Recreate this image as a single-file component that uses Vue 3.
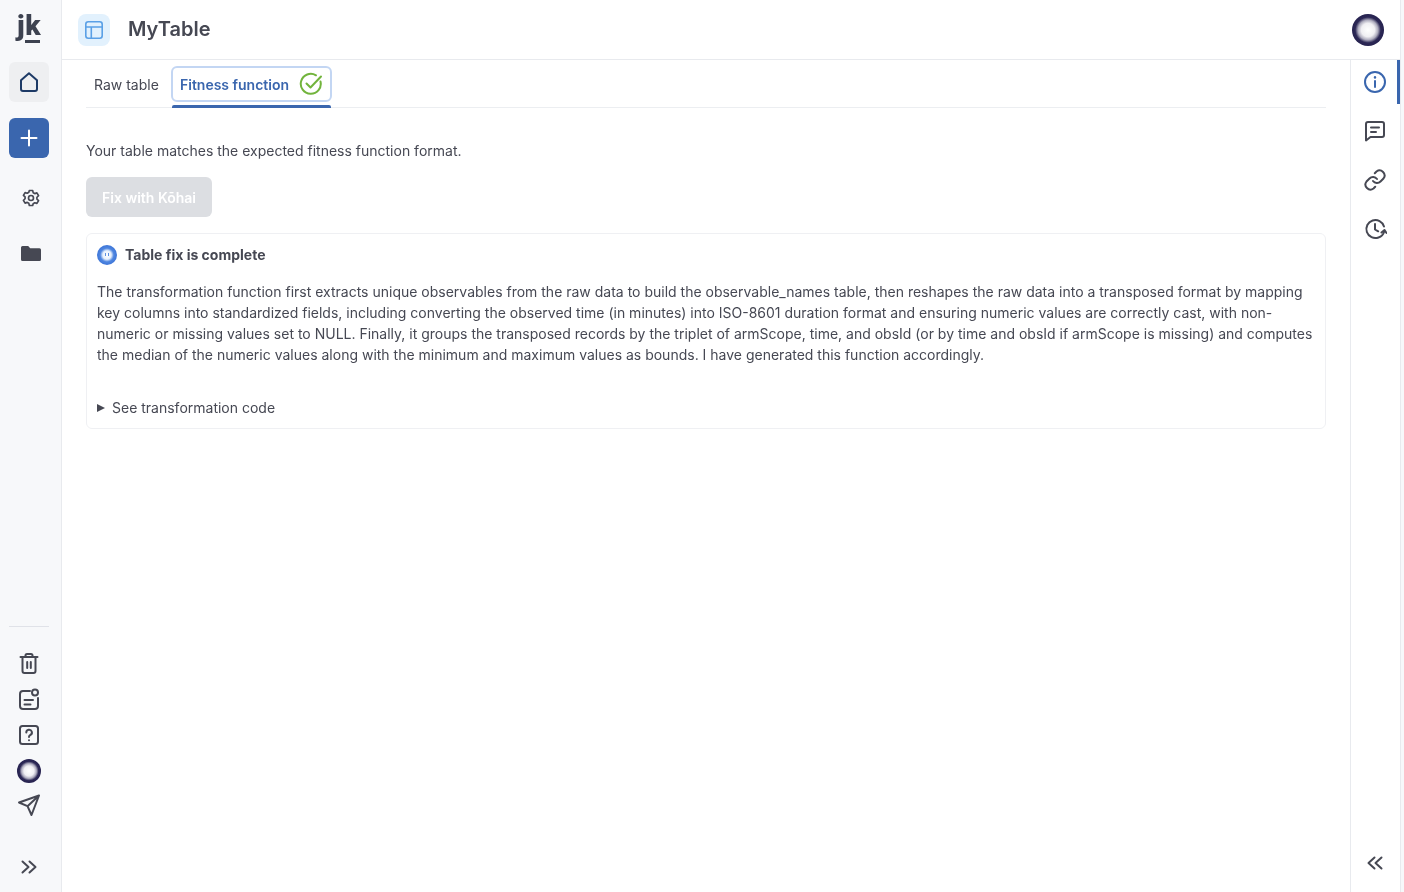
<template>
  <div class="app">
    <aside class="sidebar">
      <div class="logo">
        <span class="logo-text">j<span class="logo-k">k</span></span>
      </div>
      <button class="side-btn side-btn--home">
        <svg width="24" height="24" viewBox="0 0 24 24" fill="none" stroke="#1d3a66" stroke-width="2" stroke-linejoin="round"><path d="M4 10.2 12 3.2l8 7V19a2 2 0 0 1-2 2H6a2 2 0 0 1-2-2z" /></svg>
      </button>
      <button class="side-btn side-btn--add">
        <svg width="20" height="20" viewBox="0 0 20 20" fill="none" stroke="#fff" stroke-width="2" stroke-linecap="round"><path d="M10 2.5v15M2.5 10h15" /></svg>
      </button>
      <div class="side-icon side-icon--gear">
        <svg width="20" height="20" viewBox="0 0 24 24" fill="none" stroke="#464853" stroke-width="2" stroke-linejoin="round"><path d="M10 3h4l.6 2.6 1.9 1.1 2.6-.8 2 3.4-2 1.8v2.2l2 1.8-2 3.4-2.6-.8-1.9 1.1L14 21h-4l-.6-2.6-1.9-1.1-2.6.8-2-3.4 2-1.8v-2.2l-2-1.8 2-3.4 2.6.8 1.9-1.1z" /><circle cx="12" cy="12" r="3" /></svg>
      </div>
      <div class="side-icon side-icon--folder">
        <svg width="22" height="22" viewBox="0 0 22 22"><path d="M1 5.5A1.5 1.5 0 0 1 2.500 4h5.700l2 2.200h9.300A1.500 1.500 0 0 1 21 7.700v9.800a1.500 1.500 0 0 1-1.500 1.500h-17A1.500 1.500 0 0 1 1 17.500z" fill="#464853" /></svg>
      </div>

      <div class="side-bottom">
        <div class="side-divider"></div>
        <div class="tool">
          <svg width="22" height="22" viewBox="0 0 22 22" fill="none" stroke="#464853" stroke-width="2" stroke-linecap="round" stroke-linejoin="round"><path d="M2.500 5h17M7.500 5V3.500a1.500 1.500 0 0 1 1.500-1.500h4a1.500 1.500 0 0 1 1.500 1.500V5M4.500 5v14a2 2 0 0 0 2 2h9a2 2 0 0 0 2-2V5M9.200 10v6M12.800 10v6" /></svg>
        </div>
        <div class="tool">
          <svg width="22" height="22" viewBox="0 0 22 22" fill="none" stroke="#464853" stroke-width="2" stroke-linecap="round" stroke-linejoin="round"><path d="M12 3H5a3 3 0 0 0-3 3v12a3 3 0 0 0 3 3h12a3 3 0 0 0 3-3v-8M6.500 12h8.500M6.500 16.500h6" /><circle cx="17" cy="4.500" r="3" /></svg>
        </div>
        <div class="tool">
          <svg width="22" height="22" viewBox="0 0 22 22" fill="none" stroke="#464853" stroke-width="2" stroke-linecap="round" stroke-linejoin="round"><rect x="2" y="2" width="18" height="18" rx="2.500" /><path d="M8.300 8.500a2.800 2.800 0 1 1 4.200 2.400c-1 .6-1.500 1.100-1.500 2.100" /><path d="M11 16.200v.1" /></svg>
        </div>
        <div class="tool">
          <span class="orb orb--small"></span>
        </div>
        <div class="tool tool--send">
          <svg width="24" height="24" viewBox="0 0 24 24" fill="none" stroke="#464853" stroke-width="2" stroke-linejoin="round" stroke-linecap="round"><path d="M22 2.500 2 9.500l8.500 3.700L14.500 22zM10.500 13.200 22 2.500" /></svg>
        </div>
        <div class="tool tool--expand">
          <svg width="18" height="18" viewBox="0 0 18 18" fill="none" stroke="#464853" stroke-width="2" stroke-linecap="round" stroke-linejoin="round"><path d="m2.500 3.500 6 5.500-6 5.500M9.500 3.500l6 5.500-6 5.500" /></svg>
        </div>
      </div>
    </aside>

    <div class="main">
      <header class="header">
        <div class="header-left">
          <div class="table-badge">
            <svg width="20" height="20" viewBox="0 0 20 20" fill="none" stroke="#5aa0e6" stroke-width="1.600"><rect x="1.800" y="1.800" width="16.400" height="16.400" rx="2.500" /><path d="M1.800 7h16.400M7.300 7v11.200" /></svg>
          </div>
          <h1 class="title">MyTable</h1>
        </div>
        <span class="orb"></span>
      </header>

      <div class="body">
        <main class="content">
          <nav class="tabs">
            <button class="tab tab--raw">Raw table</button>
            <button class="tab tab--active">
              Fitness function
              <svg width="24" height="24" viewBox="0 0 24 24" fill="none" stroke="#72b43c" stroke-width="2" stroke-linecap="round" stroke-linejoin="round"><path d="M21.500 9.500A10 10 0 1 1 17 3.300" /><path d="m7.500 11.500 4 4L22 4.500" /></svg>
            </button>
          </nav>

          <p class="status">Your table matches the expected fitness function format.</p>
          <button class="fix-btn" disabled>Fix with Kōhai</button>

          <section class="card">
            <div class="card-head">
              <span class="kohai">
                <i></i><i></i>
              </span>
              <strong>Table fix is complete</strong>
            </div>
            <p class="card-text">The transformation function first extracts unique observables from the raw data to build the observable_names table, then reshapes the raw data into a transposed format by mapping key columns into standardized fields, including converting the observed time (in minutes) into ISO-8601 duration format and ensuring numeric values are correctly cast, with non-numeric or missing values set to NULL. Finally, it groups the transposed records by the triplet of armScope, time, and obsId (or by time and obsId if armScope is missing) and computes the median of the numeric values along with the minimum and maximum values as bounds. I have generated this function accordingly.</p>
            <div class="code-toggle">
              <span class="caret"></span>
              See transformation code
            </div>
          </section>
        </main>

        <aside class="rail">
          <div class="rail-item rail-item--active">
            <svg width="24" height="24" viewBox="0 0 24 24" fill="none" stroke="#3a66ae" stroke-width="2" stroke-linecap="round"><circle cx="12" cy="12" r="10" /><path d="M12 11v6" /><path d="M12 7.300v.2" stroke-width="2.400" /></svg>
          </div>
          <div class="rail-item">
            <svg width="24" height="24" viewBox="0 0 24 24" fill="none" stroke="#464853" stroke-width="2" stroke-linecap="round" stroke-linejoin="round"><path d="M3 5a2 2 0 0 1 2-2h14a2 2 0 0 1 2 2v11a2 2 0 0 1-2 2H7.500L3 21.500zM8 8.500h8M8 13h5" /></svg>
          </div>
          <div class="rail-item">
            <svg width="24" height="24" viewBox="0 0 24 24" fill="none" stroke="#464853" stroke-width="2" stroke-linecap="round" stroke-linejoin="round"><path d="M10 13a5 5 0 0 0 7.500.5l3-3a5 5 0 0 0-7-7l-1.700 1.700" /><path d="M14 11a5 5 0 0 0-7.500-.5l-3 3a5 5 0 0 0 7 7l1.700-1.700" /></svg>
          </div>
          <div class="rail-item">
            <svg width="24" height="24" viewBox="0 0 24 24" fill="none" stroke="#464853" stroke-width="2" stroke-linecap="round" stroke-linejoin="round"><path d="M21 9.500A9 9 0 1 0 15.500 20.500c2.800-.8 4.800-2.800 5.700-6" /><path d="M12 7v5.500l3.200 1.800" /><path d="M18.500 15.500 21.500 13l2 3" /></svg>
          </div>
          <div class="rail-collapse">
            <svg width="18" height="18" viewBox="0 0 18 18" fill="none" stroke="#464853" stroke-width="2" stroke-linecap="round" stroke-linejoin="round"><path d="M8.500 3.500 2.500 9l6 5.500M15.500 3.500 9.500 9l6 5.500" /></svg>
          </div>
        </aside>
      </div>
    </div>
    <div class="gutter"></div>
  </div>
</template>

<script setup>
</script>

<style>
html, body {
  margin: 0;
  background: #fff;
}
</style>

<style scoped>
.app {
  display: flex;
  height: 100vh;
  overflow: hidden;
  font-family: Inter, "Liberation Sans", sans-serif;
  font-size: 14px;
  color: #464853;
  will-change: transform;
}

.sidebar {
  width: 61px;
  flex-shrink: 0;
  display: flex;
  flex-direction: column;
  align-items: center;
  background: #f7f8fa;
  border-right: 1px solid #e8eaee;
  box-sizing: content-box;
}

.logo {
  height: 62px;
  width: 100%;
  display: flex;
  justify-content: center;
  align-items: flex-start;
}
.logo-text {
  margin: 10px 4px 0 0;
  font-family: Roboto, sans-serif;
  font-size: 28px;
  line-height: 32px;
  font-weight: 900;
  letter-spacing: -0.5px;
  color: #3d4250;
}
.logo-k {
  position: relative;
  margin-left: 1px;
}
.logo-k::after {
  content: "";
  position: absolute;
  left: 0;
  right: 0;
  top: 31px;
  height: 3px;
  background: #3d4250;
}

.side-btn {
  width: 40px;
  height: 40px;
  border: none;
  border-radius: 6px;
  padding: 0;
  display: flex;
  align-items: center;
  justify-content: center;
  margin-left: -4px;
}
.side-btn--home { background: #eeeff1; }
.side-btn--add {
  margin-top: 16px;
  background: #3a66ae;
}

.side-icon {
  display: flex;
  justify-content: center;
  margin-left: 1px;
}
.side-icon--gear { margin-top: 30px; }
.side-icon--folder { margin-top: 34px; }

.side-bottom {
  margin-top: auto;
  width: 100%;
  display: flex;
  flex-direction: column;
  align-items: center;
  padding-bottom: 16px;
}
.side-divider {
  width: 40px;
  height: 1px;
  background: #e0e2e8;
  margin: 0 0 18px -4px;
}
.tool {
  height: 36px;
  width: 100%;
  display: flex;
  align-items: center;
  justify-content: center;
  margin-left: -4px;
}
.tool--send { height: 34px; margin-top: -1px; }
.tool--expand { margin-top: 30px; height: 18px; padding-top: 6px; }

.orb {
  width: 32px;
  height: 32px;
  border-radius: 50%;
  background: radial-gradient(circle closest-side, #fff 0%, #f0eff3 42%, #aeacbe 62%, #2c2855 80%, #25214f 100%);
}
.orb--small {
  width: 24px;
  height: 24px;
}

.main {
  flex: 1;
  min-width: 0;
  display: flex;
  flex-direction: column;
}

.header {
  height: 59px;
  flex-shrink: 0;
  display: flex;
  align-items: center;
  justify-content: space-between;
  padding: 0 16px;
  border-bottom: 1px solid #e8eaee;
}
.header-left {
  display: flex;
  align-items: center;
  gap: 18px;
}
.table-badge {
  width: 32px;
  height: 32px;
  border-radius: 8px;
  background: #e2f1fd;
  display: flex;
  align-items: center;
  justify-content: center;
}
.title {
  margin: 0;
  padding-bottom: 2px;
  font-size: 20px;
  font-weight: 600;
  color: #464853;
}

.body {
  flex: 1;
  display: flex;
  min-height: 0;
}

.content {
  flex: 1;
  min-width: 0;
  padding: 0 24px;
}

.tabs {
  height: 47px;
  display: flex;
  align-items: flex-start;
  border-bottom: 1px solid #eceef1;
  gap: 4px;
}
.tab {
  height: 36px;
  margin-top: 6px;
  padding: 0 8px;
  border: none;
  background: none;
  font: inherit;
  color: #464853;
  display: flex;
  align-items: center;
  position: relative;
  white-space: nowrap;
}
.tab--raw {
  width: 81px;
  box-sizing: border-box;
}
.tab--active {
  width: 161px;
  justify-content: space-between;
  box-sizing: border-box;
  color: #3a66ae;
  font-weight: 600;
  border: 2px solid #c3d6f3;
  border-radius: 6px;
  padding: 0 7px 0 7px;
  background: #fff;
}
.tab--active::after {
  content: "";
  position: absolute;
  left: -1px;
  right: -1px;
  bottom: -8px;
  height: 3px;
  background: #3a66ae;
  border-radius: 2px 2px 0 0;
}

.status {
  margin: 32px 0 0;
  line-height: 21px;
}

.fix-btn {
  display: block;
  margin-top: 16px;
  width: 126px;
  height: 40px;
  border: none;
  border-radius: 6px;
  background: #dcdee2;
  color: #fff;
  font: inherit;
  font-weight: 600;
}

.card {
  margin-top: 16px;
  border: 1px solid #eff0f3;
  border-radius: 6px;
  padding: 10px 10px 10px;
}
.card-head {
  display: flex;
  align-items: center;
  gap: 8px;
  height: 21px;
}
.card-head strong { font-weight: 700; }
.kohai {
  width: 20px;
  height: 20px;
  border-radius: 50%;
  background: radial-gradient(circle closest-side, #fff 0%, #e8f0fc 42%, #4f86e0 68%, #3d75d8 100%);
  display: flex;
  align-items: center;
  justify-content: center;
  gap: 2px;
}
.kohai i {
  width: 1px;
  height: 3px;
  background: #5c8fe0;
}
.card-text {
  margin: 16px 0 0;
  line-height: 21px;
}
.code-toggle {
  margin-top: 32px;
  line-height: 21px;
  display: flex;
  align-items: center;
  gap: 7px;
}
.caret {
  width: 0;
  height: 0;
  border-left: 8px solid #464853;
  border-top: 4px solid transparent;
  border-bottom: 4px solid transparent;
}

.rail {
  width: 48px;
  padding-right: 1px;
  flex-shrink: 0;
  border-left: 1px solid #e8eaee;
  display: flex;
  flex-direction: column;
  align-items: center;
  padding-top: 10px;
  position: relative;
}
.rail-item {
  height: 24px;
  margin-bottom: 25px;
  display: flex;
  align-items: center;
  justify-content: center;
  position: relative;
  width: 100%;
}
.rail-item--active::after {
  content: "";
  position: absolute;
  right: -1px;
  top: -10px;
  width: 3px;
  height: 44px;
  background: #3a66ae;
}
.rail-collapse {
  margin-top: auto;
  height: 38px;
  display: flex;
  align-items: flex-start;
}

.gutter {
  width: 3px;
  flex-shrink: 0;
  background: #f7f8fa;
  border-left: 1px solid #e8eaee;
}
</style>
